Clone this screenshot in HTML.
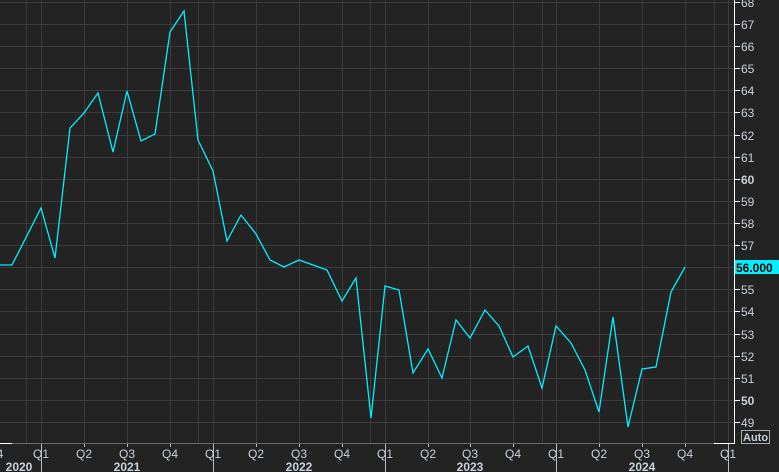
<!DOCTYPE html>
<html><head><style>
html,body{margin:0;padding:0;background:#232323;}
svg{display:block;font-family:"Liberation Sans",sans-serif;}
</style></head><body>
<svg width="779" height="472" xmlns="http://www.w3.org/2000/svg">
<rect x="0" y="0" width="779" height="472" fill="#232323"/>
<rect x="0" y="0" width="734" height="443" fill="#222322"/>
<g stroke="#3a3b3a" stroke-width="1">
<line x1="0" y1="2.5" x2="734" y2="2.5"/><line x1="0" y1="24.5" x2="734" y2="24.5"/><line x1="0" y1="46.5" x2="734" y2="46.5"/><line x1="0" y1="68.5" x2="734" y2="68.5"/><line x1="0" y1="90.5" x2="734" y2="90.5"/><line x1="0" y1="112.5" x2="734" y2="112.5"/><line x1="0" y1="135.5" x2="734" y2="135.5"/><line x1="0" y1="157.5" x2="734" y2="157.5"/><line x1="0" y1="179.5" x2="734" y2="179.5"/><line x1="0" y1="201.5" x2="734" y2="201.5"/><line x1="0" y1="223.5" x2="734" y2="223.5"/><line x1="0" y1="245.5" x2="734" y2="245.5"/><line x1="0" y1="267.5" x2="734" y2="267.5"/><line x1="0" y1="289.5" x2="734" y2="289.5"/><line x1="0" y1="311.5" x2="734" y2="311.5"/><line x1="0" y1="334.5" x2="734" y2="334.5"/><line x1="0" y1="356.5" x2="734" y2="356.5"/><line x1="0" y1="378.5" x2="734" y2="378.5"/><line x1="0" y1="400.5" x2="734" y2="400.5"/><line x1="0" y1="422.5" x2="734" y2="422.5"/>
<line x1="26.5" y1="0" x2="26.5" y2="443"/><line x1="41.5" y1="0" x2="41.5" y2="443"/><line x1="84.5" y1="0" x2="84.5" y2="443"/><line x1="127.5" y1="0" x2="127.5" y2="443"/><line x1="170.5" y1="0" x2="170.5" y2="443"/><line x1="198.5" y1="0" x2="198.5" y2="443"/><line x1="213.5" y1="0" x2="213.5" y2="443"/><line x1="256.5" y1="0" x2="256.5" y2="443"/><line x1="299.5" y1="0" x2="299.5" y2="443"/><line x1="342.5" y1="0" x2="342.5" y2="443"/><line x1="370.5" y1="0" x2="370.5" y2="443"/><line x1="385.5" y1="0" x2="385.5" y2="443"/><line x1="428.5" y1="0" x2="428.5" y2="443"/><line x1="470.5" y1="0" x2="470.5" y2="443"/><line x1="513.5" y1="0" x2="513.5" y2="443"/><line x1="542.5" y1="0" x2="542.5" y2="443"/><line x1="556.5" y1="0" x2="556.5" y2="443"/><line x1="599.5" y1="0" x2="599.5" y2="443"/><line x1="642.5" y1="0" x2="642.5" y2="443"/><line x1="685.5" y1="0" x2="685.5" y2="443"/><line x1="714.5" y1="0" x2="714.5" y2="443"/><line x1="728.5" y1="0" x2="728.5" y2="443"/>
</g>
<polyline fill="none" stroke="#00f0ff" stroke-width="1.3" points="0,265 12,265 41,208 55,258 70,128 84,113 98,93 113,152 127,91 141,141 155,134 170,32 184,11 198,140 213,171 227,241 241,215 256,234 270,260 284,267 299,260 313,265 327,270 342,301 356,278 371,418 385,286 399,290 413,373 428,349 442,378 456,320 470,338 485,310 499,326 513,357 528,346 542,388 556,326 571,343 585,370 599,412 613,317 628,427 642,369 656,367 671,292 685,267"/>
<line x1="0" y1="443.5" x2="734" y2="443.5" stroke="#6a6a6a"/>
<line x1="0" y1="443.5" x2="12" y2="443.5" stroke="#fff"/>
<line x1="714" y1="443.5" x2="734" y2="443.5" stroke="#fff"/>
<line x1="734.5" y1="0" x2="734.5" y2="444" stroke="#fff"/>
<g stroke="#fff">
<line x1="735" y1="2.5" x2="740" y2="2.5"/><line x1="735" y1="24.5" x2="740" y2="24.5"/><line x1="735" y1="46.5" x2="740" y2="46.5"/><line x1="735" y1="68.5" x2="740" y2="68.5"/><line x1="735" y1="90.5" x2="740" y2="90.5"/><line x1="735" y1="112.5" x2="740" y2="112.5"/><line x1="735" y1="135.5" x2="740" y2="135.5"/><line x1="735" y1="157.5" x2="740" y2="157.5"/><line x1="735" y1="179.5" x2="740" y2="179.5"/><line x1="735" y1="201.5" x2="740" y2="201.5"/><line x1="735" y1="223.5" x2="740" y2="223.5"/><line x1="735" y1="245.5" x2="740" y2="245.5"/><line x1="735" y1="289.5" x2="740" y2="289.5"/><line x1="735" y1="311.5" x2="740" y2="311.5"/><line x1="735" y1="334.5" x2="740" y2="334.5"/><line x1="735" y1="356.5" x2="740" y2="356.5"/><line x1="735" y1="378.5" x2="740" y2="378.5"/><line x1="735" y1="400.5" x2="740" y2="400.5"/><line x1="735" y1="422.5" x2="740" y2="422.5"/>
</g>
<g fill="#c8d2dc" font-size="12">
<text x="741" y="7">68</text><text x="741" y="29">67</text><text x="741" y="51">66</text><text x="741" y="73">65</text><text x="741" y="95">64</text><text x="741" y="117">63</text><text x="741" y="140">62</text><text x="741" y="162">61</text><text x="741" y="184" font-weight="bold">60</text><text x="741" y="206">59</text><text x="741" y="228">58</text><text x="741" y="250">57</text><text x="741" y="294">55</text><text x="741" y="316">54</text><text x="741" y="339">53</text><text x="741" y="361">52</text><text x="741" y="383">51</text><text x="741" y="405" font-weight="bold">50</text><text x="741" y="427">49</text>
</g>
<rect x="735" y="260" width="44" height="14" fill="#00f0ff"/>
<text x="736" y="272" font-size="12" font-weight="bold" fill="#000">56.000</text>
<rect x="741.5" y="430.5" width="28" height="13" fill="none" stroke="#aaa"/>
<text x="743" y="441" font-size="11" font-weight="bold" fill="#c8d2dc">Auto</text>
<g stroke="#bbb">
<line x1="41.5" y1="444" x2="41.5" y2="472"/><line x1="213.5" y1="444" x2="213.5" y2="472"/><line x1="385.5" y1="444" x2="385.5" y2="472"/><line x1="556.5" y1="444" x2="556.5" y2="472"/><line x1="728.5" y1="444" x2="728.5" y2="472"/>
<line x1="84.5" y1="444" x2="84.5" y2="447"/><line x1="127.5" y1="444" x2="127.5" y2="447"/><line x1="170.5" y1="444" x2="170.5" y2="447"/><line x1="256.5" y1="444" x2="256.5" y2="447"/><line x1="299.5" y1="444" x2="299.5" y2="447"/><line x1="342.5" y1="444" x2="342.5" y2="447"/><line x1="428.5" y1="444" x2="428.5" y2="447"/><line x1="470.5" y1="444" x2="470.5" y2="447"/><line x1="513.5" y1="444" x2="513.5" y2="447"/><line x1="599.5" y1="444" x2="599.5" y2="447"/><line x1="642.5" y1="444" x2="642.5" y2="447"/><line x1="685.5" y1="444" x2="685.5" y2="447"/>
</g>
<g fill="#c8d2dc" font-size="12" text-anchor="middle">
<text x="0" y="458">4</text>
<text x="41" y="458">Q1</text><text x="84" y="458">Q2</text><text x="127" y="458">Q3</text><text x="170" y="458">Q4</text>
<text x="213" y="458">Q1</text><text x="256" y="458">Q2</text><text x="299" y="458">Q3</text><text x="342" y="458">Q4</text>
<text x="385" y="458">Q1</text><text x="428" y="458">Q2</text><text x="470" y="458">Q3</text><text x="513" y="458">Q4</text>
<text x="556" y="458">Q1</text><text x="599" y="458">Q2</text><text x="642" y="458">Q3</text><text x="685" y="458">Q4</text>
<text x="728" y="458">Q1</text>
</g>
<g fill="#c8d2dc" font-size="12" font-weight="bold" text-anchor="middle">
<text x="19" y="471">2020</text><text x="127" y="471">2021</text><text x="299" y="471">2022</text><text x="470" y="471">2023</text><text x="642" y="471">2024</text>
</g>
</svg>
</body></html>
